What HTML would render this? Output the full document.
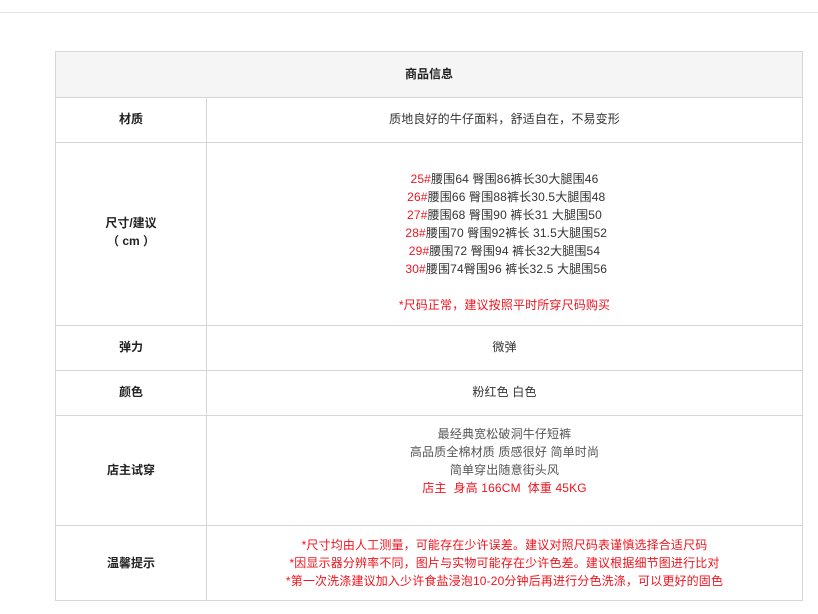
<!DOCTYPE html>
<html><head><meta charset="utf-8"><style>
body{margin:0;width:818px;height:614px;background:#fff;position:relative;overflow:hidden;font-family:"Liberation Sans","Noto Sans CJK SC",sans-serif;font-size:12px;color:#333}
.topline{position:absolute;left:0;top:12px;width:818px;height:1px;background:#e3e3e3}
.tb{position:absolute;left:55px;top:51px;width:746px;height:548px;border:1px solid #d6d6d6}
.h{position:absolute;left:0;top:0;width:746px;height:45px;background:#f5f5f5;border-bottom:1px solid #d6d6d6;text-align:center;line-height:45px;font-weight:bold;color:#222}
.hl{position:absolute;left:0;width:746px;height:1px;background:#d6d6d6}
.vl{position:absolute;left:150px;top:46px;width:1px;height:503px;background:#d6d6d6}
.l{position:absolute;left:0;width:150px;text-align:center;font-weight:bold;color:#222;line-height:18px}
.r{position:absolute;left:151px;width:595px;text-align:center;line-height:18px;white-space:pre;letter-spacing:0.15px}
.red{color:#f0141e}
.g{color:#555}
</style></head><body>
<div class="topline"></div>
<div class="tb">
<div class="h">商品信息</div>
<div class="vl"></div>
<div class="hl" style="top:90px"></div>
<div class="hl" style="top:273px"></div>
<div class="hl" style="top:318px"></div>
<div class="hl" style="top:363px"></div>
<div class="hl" style="top:473px"></div>

<div class="l" style="top:58px">材质</div>
<div class="r" style="top:58px">质地良好的牛仔面料，舒适自在，不易变形</div>

<div class="l" style="top:162px">尺寸/建议<br>（ cm ）</div>
<div class="r" style="top:118px"><span class="red">25#</span>腰围64 臀围86裤长30大腿围46
 <span class="red">26#</span>腰围66 臀围88裤长30.5大腿围48
<span class="red">27#</span>腰围68 臀围90 裤长31 大腿围50
 <span class="red">28#</span>腰围70 臀围92裤长 31.5大腿围52
<span class="red">29#</span>腰围72 臀围94 裤长32大腿围54
 <span class="red">30#</span>腰围74臀围96 裤长32.5 大腿围56

<span class="red">*尺码正常，建议按照平时所穿尺码购买</span></div>

<div class="l" style="top:286px">弹力</div>
<div class="r" style="top:286px">微弹</div>

<div class="l" style="top:331px">颜色</div>
<div class="r" style="top:331px">粉红色 白色</div>

<div class="l" style="top:409px">店主试穿</div>
<div class="r g" style="top:373px">最经典宽松破洞牛仔短裤
高品质全棉材质 质感很好 简单时尚
简单穿出随意街头风
<span class="red">店主  身高 166CM  体重 45KG</span></div>

<div class="l" style="top:502px">温馨提示</div>
<div class="r red" style="top:484px">*尺寸均由人工测量，可能存在少许误差。建议对照尺码表谨慎选择合适尺码
*因显示器分辨率不同，图片与实物可能存在少许色差。建议根据细节图进行比对
*第一次洗涤建议加入少许食盐浸泡10-20分钟后再进行分色洗涤，可以更好的固色</div>
</div>
</body></html>
